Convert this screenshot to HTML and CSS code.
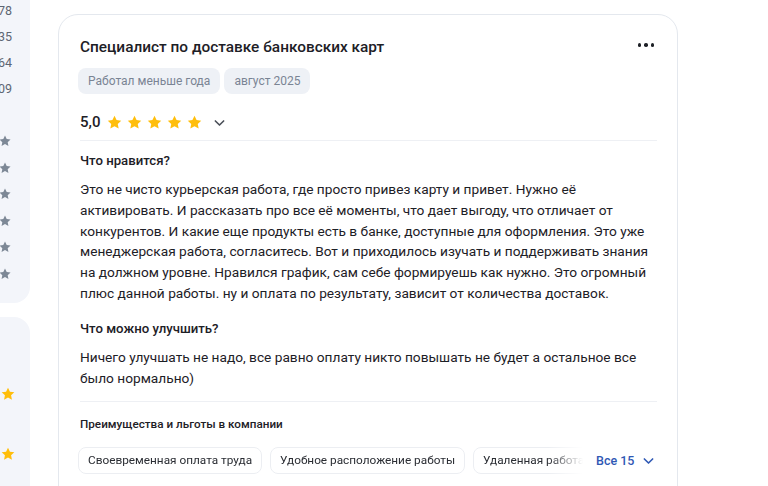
FILE: index.html
```html
<!DOCTYPE html>
<html lang="ru">

<head>
    <meta charset="UTF-8">
    <meta name="viewport" content="width=device-width, initial-scale=1.0">
    <title>Отзыв</title>

    <link rel="stylesheet" href="styles.css">
</head>

<body>
    <div class="page">
        <aside class="side">
            <div class="side-card">
                <div class="side-num">78</div>
                <div class="side-num">35</div>
                <div class="side-num">64</div>
                <div class="side-num">09</div>
                <div class="side-stars">
                    <svg class="side-star" viewBox="0 0 24 24"><path d="M12 2.5l2.9 6.1 6.6.8-4.9 4.6 1.3 6.6L12 17.3l-5.9 3.3 1.3-6.6-4.9-4.6 6.6-.8z" /></svg>
                    <svg class="side-star" viewBox="0 0 24 24"><path d="M12 2.5l2.9 6.1 6.6.8-4.9 4.6 1.3 6.6L12 17.3l-5.9 3.3 1.3-6.6-4.9-4.6 6.6-.8z" /></svg>
                    <svg class="side-star" viewBox="0 0 24 24"><path d="M12 2.5l2.9 6.1 6.6.8-4.9 4.6 1.3 6.6L12 17.3l-5.9 3.3 1.3-6.6-4.9-4.6 6.6-.8z" /></svg>
                    <svg class="side-star" viewBox="0 0 24 24"><path d="M12 2.5l2.9 6.1 6.6.8-4.9 4.6 1.3 6.6L12 17.3l-5.9 3.3 1.3-6.6-4.9-4.6 6.6-.8z" /></svg>
                    <svg class="side-star" viewBox="0 0 24 24"><path d="M12 2.5l2.9 6.1 6.6.8-4.9 4.6 1.3 6.6L12 17.3l-5.9 3.3 1.3-6.6-4.9-4.6 6.6-.8z" /></svg>
                    <svg class="side-star" viewBox="0 0 24 24"><path d="M12 2.5l2.9 6.1 6.6.8-4.9 4.6 1.3 6.6L12 17.3l-5.9 3.3 1.3-6.6-4.9-4.6 6.6-.8z" /></svg>
                </div>
            </div>
            <div class="side-card side-card-2">
                <svg class="side-star gold" viewBox="0 0 24 24"><path d="M12 2.5l2.9 6.1 6.6.8-4.9 4.6 1.3 6.6L12 17.3l-5.9 3.3 1.3-6.6-4.9-4.6 6.6-.8z" /></svg>
                <svg class="side-star gold" viewBox="0 0 24 24"><path d="M12 2.5l2.9 6.1 6.6.8-4.9 4.6 1.3 6.6L12 17.3l-5.9 3.3 1.3-6.6-4.9-4.6 6.6-.8z" /></svg>
            </div>
        </aside>

        <article class="review">
            <div class="review-head">
                <h1 class="review-title">Специалист по доставке банковских карт</h1>
                <span class="more">
                    <i></i><i></i><i></i>
                </span>
            </div>
            <div class="tags">
                <span class="tag">Работал меньше года</span>
                <span class="tag">август 2025</span>
            </div>
            <div class="rating">
                <span class="rating-value">5,0</span>
                <span class="stars">
                    <svg class="star" viewBox="0 0 24 24"><path d="M12 2.5l2.9 6.1 6.6.8-4.9 4.6 1.3 6.6L12 17.3l-5.9 3.3 1.3-6.6-4.9-4.6 6.6-.8z" /></svg>
                    <svg class="star" viewBox="0 0 24 24"><path d="M12 2.5l2.9 6.1 6.6.8-4.9 4.6 1.3 6.6L12 17.3l-5.9 3.3 1.3-6.6-4.9-4.6 6.6-.8z" /></svg>
                    <svg class="star" viewBox="0 0 24 24"><path d="M12 2.5l2.9 6.1 6.6.8-4.9 4.6 1.3 6.6L12 17.3l-5.9 3.3 1.3-6.6-4.9-4.6 6.6-.8z" /></svg>
                    <svg class="star" viewBox="0 0 24 24"><path d="M12 2.5l2.9 6.1 6.6.8-4.9 4.6 1.3 6.6L12 17.3l-5.9 3.3 1.3-6.6-4.9-4.6 6.6-.8z" /></svg>
                    <svg class="star" viewBox="0 0 24 24"><path d="M12 2.5l2.9 6.1 6.6.8-4.9 4.6 1.3 6.6L12 17.3l-5.9 3.3 1.3-6.6-4.9-4.6 6.6-.8z" /></svg>
                </span>
                <svg class="chevron" viewBox="0 0 12 8"><path d="M1.5 1.8L6 6.2l4.5-4.4" /></svg>
            </div>

            <section class="block">
                <h2 class="block-title">Что нравится?</h2>
                <p class="block-text">Это не чисто курьерская работа, где просто привез карту и привет. Нужно её активировать. И рассказать про все её моменты, что дает выгоду, что отличает от конкурентов. И какие еще продукты есть в банке, доступные для оформления. Это уже менеджерская работа, согласитесь. Вот и приходилось изучать и поддерживать знания на должном уровне. Нравился график, сам себе формируешь как нужно. Это огромный плюс данной работы. ну и оплата по результату, зависит от количества доставок.</p>
                <h2 class="block-title second">Что можно улучшить?</h2>
                <p class="block-text">Ничего улучшать не надо, все равно оплату никто повышать не будет а остальное все было нормально)</p>
            </section>

            <section class="block perks">
                <h3 class="perks-title">Преимущества и льготы в компании</h3>
                <div class="perks-row">
                    <div class="chips">
                        <span class="chip">Своевременная оплата труда</span>
                        <span class="chip">Удобное расположение работы</span>
                        <span class="chip">Удаленная работа</span>
                    </div>
                    <a class="all" href="#">Все 15
                        <svg class="chevron blue" viewBox="0 0 12 8"><path d="M1.5 1.8L6 6.2l4.5-4.4" /></svg>
                    </a>
                </div>
            </section>
            <div class="block"></div>
        </article>
    </div>
</body>

</html>
```

FILE: styles.css
```css
body {
    margin: 0;
    background: #fff;
    font-family: Roboto, "Noto Sans", Arial, sans-serif;
    color: #1d2026;
}

.page {
    display: flex;
    align-items: flex-start;
    gap: 28px;
}

/* left column, mostly cut off */
.side {
    width: 200px;
    margin-left: -170px;
    flex: none;
}

.side-card {
    background: #f3f5fa;
    border-radius: 0 0 16px 16px;
    padding: 0 18px 22px 0;
    text-align: right;
}

.side-num {
    font-size: 12.5px;
    line-height: 26px;
    color: #5d6573;
    margin-top: -2px;
    margin-bottom: 2px;
}

.side-stars {
    display: flex;
    flex-direction: column;
    align-items: flex-end;
    gap: 12.5px;
    padding-top: 30px;
}

.side-star {
    width: 14px;
    height: 14px;
    fill: #7d8896;
    display: block;
}

.side-card-2 {
    margin-top: 14px;
    border-radius: 16px 16px 0 0;
    height: 200px;
    padding: 69px 14px 0 0;
    box-sizing: border-box;
    display: flex;
    flex-direction: column;
    align-items: flex-end;
    gap: 44px;
}

.side-star.gold {
    width: 16px;
    height: 16px;
    fill: #ffbe0b;
}

/* review card */
.review {
    width: 620px;
    box-sizing: border-box;
    margin-top: 14px;
    border: 1px solid #e4e8ee;
    border-radius: 20px;
    padding: 20px 20px 0 21px;
}

.review-head {
    display: flex;
    justify-content: space-between;
    align-items: center;
}

.review-title {
    margin: 0;
    font-size: 15.4px;
    line-height: 24px;
    font-weight: 500;
}

.more {
    display: flex;
    gap: 3px;
    padding: 6px 3px;
    margin-top: -4px;
}

.more i {
    width: 3.5px;
    height: 3.5px;
    border-radius: 50%;
    background: #1d2026;
}

.tags {
    display: flex;
    gap: 4px;
    margin-top: 9px;
    margin-left: -2px;
}

.tag {
    background: #eef1f6;
    color: #7a8494;
    font-size: 12px;
    line-height: 26px;
    padding: 0 10px;
    border-radius: 8px;
}

.rating {
    display: flex;
    align-items: center;
    height: 28px;
    margin-top: 14px;
    margin-bottom: 4px;
}

.rating-value {
    font-size: 15px;
    font-weight: 500;
    margin-right: 6px;
}

.stars {
    display: flex;
    gap: 3px;
}

.star {
    width: 17px;
    height: 17px;
    fill: #ffbe0b;
    display: block;
}

.chevron {
    width: 11px;
    height: 8px;
    fill: none;
    stroke: #4a4f58;
    stroke-width: 1.8;
    stroke-linecap: round;
    stroke-linejoin: round;
    margin-left: 11px;
    margin-top: 2px;
}

.block {
    border-top: 1px solid #eef0f4;
    padding: 10px 0 13px;
}

.block-title {
    margin: 0;
    font-size: 13.2px;
    line-height: 20px;
    font-weight: 500;
}

.block-title.second {
    margin-top: 15px;
}

.block-text {
    margin: 8px 0 0;
    font-size: 13.7px;
    line-height: 20.8px;
}

.perks {
    padding-top: 12px;
}

.perks-title {
    margin: 0;
    font-size: 11.7px;
    line-height: 20px;
    font-weight: 500;
}

.perks-row {
    display: flex;
    align-items: center;
    margin-top: 13px;
    margin-left: -2px;
}

.chips {
    display: flex;
    gap: 8px;
    width: 510px;
    overflow: hidden;
    flex: none;
    -webkit-mask-image: linear-gradient(to right, #000 470px, transparent 505px);
    mask-image: linear-gradient(to right, #000 470px, transparent 505px);
}

.chip {
    flex: none;
    border: 1px solid #eceef2;
    border-radius: 8px;
    font-size: 11.8px;
    line-height: 25px;
    padding: 0 9px;
    color: #2a2d33;
    white-space: nowrap;
}

.all {
    display: flex;
    align-items: center;
    margin-left: 8px;
    color: #2f58b4;
    font-size: 12.5px;
    font-weight: 500;
    text-decoration: none;
    white-space: nowrap;
}

.chevron.blue {
    stroke: #2f58b4;
    margin-left: 9px;
    margin-top: 1px;
}
```
